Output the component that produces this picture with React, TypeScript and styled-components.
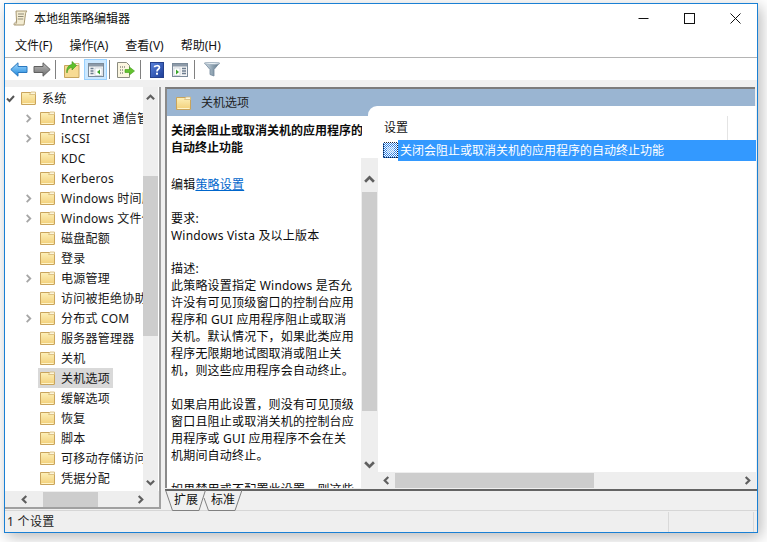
import React from "react";
import styled, { createGlobalStyle } from "styled-components";

const Global = createGlobalStyle`
  html, body { margin: 0; padding: 0; background: #fff; }
  body { width: 767px; height: 542px; overflow: hidden; font-family: "Noto Sans", "Noto Sans CJK SC", sans-serif; font-size: 12px; color: #1a1a1a; }
  * { box-sizing: border-box; }
`;
const Stage = styled.div`
  width: 767px; height: 542px; padding: 3px 9px 9px 4px;
`;
const Win = styled.div`
  width: 754px; height: 530px; border: 1px solid #1a80d4; background: #f0f0f0;
  display: flex; flex-direction: column; box-shadow: 3px 4px 14px rgba(0,0,0,.28);
`;
const TitleBar = styled.div`
  height: 33px; background: #fff; display: flex; align-items: center; padding: 0 0 5px 8px; flex: none;
`;
const TitleText = styled.span`
  margin-left: 6px; font-size: 12px; color: #111; flex: 1;
`;
const WinBtn = styled.div`
  width: 46px; height: 28px; display: flex; align-items: center; justify-content: center;
  &:last-child { margin-right: -1px; }
`;
const MenuBar = styled.div`
  height: 21px; background: #fff; border-bottom: 1px solid #b4b4b4; display: flex; padding-left: 10px; gap: 17px; flex: none;
`;
const MenuItem = styled.span`
  line-height: 17px; font-size: 12px; color: #111;
`;
const Toolbar = styled.div`
  height: 22px; background: #fff; display: flex; align-items: flex-end; padding-left: 5px; flex: none;
`;
const ToolBtn = styled.div<{ $on?: boolean; $w?: number }>`
  width: ${p => p.$w ?? 22}px; height: 21px; display: flex; align-items: center; justify-content: center; flex: none;
  ${p => p.$on ? "background:#cce8ff;border:1px solid #99d1ff;" : ""}
`;
const ToolSep = styled.div<{ $ml: number }>`
  width: 1px; height: 19px; background: #808080; margin: 0 4px 1px ${p => p.$ml}px; flex: none;
`;
const Main = styled.div`
  height: 430px; padding-top: 7px; display: flex; flex: none;
`;
const TreePane = styled.div`
  width: 156px; height: 422px; background: #fff; border-right: 2px solid #a0a0a0; border-bottom: 2px solid #a0a0a0; display: flex; flex-direction: column; flex: none;
`;
const TreeTop = styled.div`
  height: 404px; display: flex; flex: none;
`;
const TreeList = styled.div`
  width: 138px; overflow: hidden; flex: none; padding-top: 1px;
`;
const Row = styled.div<{ $root?: boolean }>`
  height: 20px; display: flex; align-items: center; white-space: nowrap; padding-left: ${p => p.$root ? 0 : 18}px;
`;
const Caret = styled.div<{ $root?: boolean }>`
  width: ${p => p.$root ? 14 : 15}px; height: 20px; display: flex; align-items: center; justify-content: center; flex: none;
  padding-right: 4px;
`;
const RowBody = styled.div<{ $sel?: boolean }>`
  display: flex; align-items: center; height: 20px; padding: 0 3px 0 2px; background: ${p => p.$sel ? "#d9d9d9" : "transparent"};
`;
const RowText = styled.span`
  margin-left: 6px; font-size: 12px; letter-spacing: .25px; color: #161616;
`;
const VTrack = styled.div<{ $w: number; $mt?: number; $ml?: number }>`
  width: ${p => p.$w}px; margin-top: ${p => p.$mt ?? 0}px; margin-left: ${p => p.$ml ?? 0}px; background: #eee; display: flex; flex-direction: column; align-items: center; flex: none;
`;
const ArrowSlot = styled.div<{ $h?: number; $end?: boolean; $pad: number }>`
  ${p => p.$h ? `height:${p.$h}px;flex:none;` : "flex:1;"}
  width: 100%; display: flex; justify-content: center;
  align-items: ${p => p.$end ? "flex-end" : "flex-start"};
  ${p => p.$end ? `padding-bottom:${p.$pad}px;` : `padding-top:${p.$pad}px;`}
`;
const VThumb = styled.div<{ $h: number }>`
  width: 15px; height: ${p => p.$h}px; background: #cdcdcd; flex: none;
`;
const HTrack = styled.div<{ $h: number }>`
  height: ${p => p.$h}px; background: #eee; display: flex; align-items: center; flex: none;
`;
const HSlot = styled.div<{ $w: number }>`
  width: ${p => p.$w}px; height: 100%; display: flex; align-items: center; justify-content: center; flex: none;
`;
const HThumb = styled.div<{ $w: number }>`
  width: ${p => p.$w}px; height: 15px; background: #cdcdcd; flex: none;
`;
const HFill = styled.div`
  flex: 1;
`;
const HEnd = styled.div`
  height: 2px; flex: 1; background: #f0f0f0;
`;
const Right = styled.div`
  width: 592px; margin-left: 4px; display: flex; flex-direction: column; flex: none;
`;
const Pane = styled.div`
  width: 590px; height: 401px; background: #fff; border-top: 2px solid #7c7c7c; border-left: 2px solid #8a8a8a; display: flex; flex-direction: column; flex: none;
`;
const Band = styled.div`
  height: 27px; background: #9ab5d2; display: flex; align-items: center; padding-left: 9px; flex: none;
`;
const BandText = styled.span`
  margin: 0 0 2px 10px; font-size: 12px; color: #1f1f1f;
`;
const Split = styled.div`
  height: 372px; display: flex; flex: none;
`;
const Desc = styled.div`
  width: 195px; height: 372px; overflow: hidden; padding: 6px 0 0 4px; line-height: 17px; font-size: 12px; flex: none; color: #0c0c0c;
`;
const DescTitle = styled.div`
  font-weight: 700; width: 194px; margin-bottom: 20px;
`;
const Para = styled.div<{ $gap?: number }>`
  margin-bottom: ${p => p.$gap ?? 17}px; width: 184px; letter-spacing: .2px;
`;
const PolicyLink = styled.span`
  color: #0066cc; text-decoration: underline;
`;
const List = styled.div`
  width: 378px; height: 372px; position: relative; display: flex; flex-direction: column; flex: none; background: #fff;
  &::before { content: ""; position: absolute; left: -10px; right: 0; top: -10px; height: 10px; background: #fff; border-top-left-radius: 9px; }
`;
const ColHead = styled.div`
  height: 24px; display: flex; flex: none; padding-left: 6px; align-items: center;
`;
const ColTitle = styled.span`
  width: 343px; font-size: 12px; color: #111; margin-top: -3px;
`;
const ColLine = styled.div`
  width: 1px; height: 24px; background: #e4e4e4;
`;
const SelRow = styled.div`
  height: 21px; display: flex; align-items: flex-start; padding: 0 0 0 5px; flex: none;
`;
const SelIconBox = styled.div`
  width: 15px; height: 21px; padding-top: 2px; flex: none;
`;
const SelText = styled.div`
  flex: 1; height: 21px; background: #3399ff; color: #fff; font-size: 12px; line-height: 21px; padding-left: 2px;
`;
const ListFill = styled.div`
  flex: 1;
`;
const TabStrip = styled.div`
  height: 21px; border-top: 2px solid #646464; width: 592px; margin-top: 1px; position: relative; flex: none; display: flex; padding-left: 9px; gap: 11px;
`;
const TabOutline = styled.svg`
  position: absolute; left: 0; top: -1px;
`;
const TabLabel = styled.span`
  position: relative; font-size: 12px; line-height: 18px; width: 26px; color: #111;
`;
const Status = styled.div`
  flex: 1; border-top: 1px solid #d6d6d6; background: #efefef; display: flex; align-items: stretch;
`;
const StatusCell = styled.div<{ $w: number; $line?: boolean }>`
  width: ${p => p.$w}px; margin-top: 1px; font-size: 12px; line-height: 19px; padding-left: 2px; letter-spacing: .3px; color: #222;
  ${p => p.$line ? "border-right: 1px solid #d9d9d9;" : ""}
`;

const Folder = () => (
  <svg width="15" height="14" viewBox="0 0 15 14">
    <defs><linearGradient id="fg" x1="0" y1="0" x2="0" y2="1"><stop offset="0" stopColor="#fdf0b8" /><stop offset="1" stopColor="#f2cf78" /></linearGradient></defs>
    <path d="M.5 1.500h13.500a.5.5 0 0 1 .5.5v11a.5.5 0 0 1-.5.5H.5z" fill="url(#fg)" stroke="#c9a45c" />
    <path d="M8.500 3.500 10 1h4.500v2.500z" fill="#fbf5dc" stroke="#d6b877" strokeWidth=".8" />
    <path d="M1.500 12.500h12" stroke="#fff4c8" />
  </svg>
);
const Chevron = ({ dir, color = "#5f5f5f", sw = 2.4, s = 9 }: { dir: "u" | "d" | "l" | "r"; color?: string; sw?: number; s?: number }) => {
  const d = { u: "M1 7 5 3l4 4", d: "M1 3l4 4 4-4", l: "M7 1 3 5l4 4", r: "M3 1l4 4-4 4" }[dir];
  return <svg width={s} height={s} viewBox="0 0 10 10"><path d={d} fill="none" stroke={color} strokeWidth={sw} /></svg>;
};
const ExpandedMark = () => (
  <svg width="9" height="9" viewBox="0 0 9 9"><path d="M1 4.500 3.500 7 8 2" fill="none" stroke="#555" strokeWidth="2" /></svg>
);
const Back = () => (
  <svg width="18" height="15" viewBox="0 0 18 15">
    <defs><linearGradient id="bk" x1="0" y1="0" x2="0" y2="1"><stop offset="0" stopColor="#a8dcff" /><stop offset="1" stopColor="#1a86dc" /></linearGradient></defs>
    <path d="M.8 7.500 8 .8v3.700h9v6H8v3.700z" fill="url(#bk)" stroke="#2a78bf" />
  </svg>
);
const Forward = () => (
  <svg width="18" height="15" viewBox="0 0 18 15">
    <defs><linearGradient id="fw" x1="0" y1="0" x2="0" y2="1"><stop offset="0" stopColor="#bcbcbc" /><stop offset="1" stopColor="#6e6e6e" /></linearGradient></defs>
    <path d="M17.200 7.500 10 .8v3.700H1v6h9v3.700z" fill="url(#fw)" stroke="#606060" />
  </svg>
);
const UpFolder = () => (
  <svg width="16" height="17" viewBox="0 0 16 17">
    <path d="M.5 4.500h14.500v12H.5z" fill="#f7db93" stroke="#c7a55e" />
    <path d="M10 4.500 11 2.500h4v2z" fill="#fbf5dc" stroke="#c7a55e" strokeWidth=".7" />
    <path d="M3 12C3.500 8 6 6.500 8 6.500V9l4.500-4.500L8 .5v3C4 4 2 8 3 12z" fill="#5fc02c" stroke="#3d9418" strokeWidth=".6" />
  </svg>
);
const Pane1 = ({ right }: { right?: boolean }) => (
  <svg width="16" height="14" viewBox="0 0 16 14">
    <rect x=".5" y=".5" width="15" height="13" fill="#f5f5f5" stroke="#7b8a99" />
    <rect x="1" y="1" width="14" height="2.500" fill="#8d9aa8" />
    {right ? (
      <><rect x="2" y="5" width="6" height="7.500" fill="#fff" stroke="#b8c2cc" strokeWidth=".6" />
        <path d="M4 6.500 7 9 4 11.500z" fill="#3aa52a" />
        <path d="M10 5.500h4M10 8h4M10 10.500h4" stroke="#6d7e90" strokeWidth="1.300" /></>
    ) : (
      <><path d="M2.500 5.500h3M2.500 8h3M2.500 10.500h3" stroke="#6d7e90" strokeWidth="1.300" />
        <rect x="7" y="5" width="7" height="7.500" fill="#fff" stroke="#b8c2cc" strokeWidth=".6" />
        <path d="M12 6.500 9 9l3 2.500z" fill="#3aa52a" /></>
    )}
  </svg>
);
const Export = () => (
  <svg width="18" height="16" viewBox="0 0 18 16">
    <path d="M.5.500h9l3 3v12H.5z" fill="#fbf6e0" stroke="#8c8c80" />
    <path d="M3 5h5M3 8h3M3 11h3" stroke="#555" strokeWidth="1" strokeDasharray="1 1" />
    <path d="M8 7.500h4.500V5l5 4-5 4v-2.500H8z" fill="#63c22f" stroke="#3f9a1a" strokeWidth=".6" />
  </svg>
);
const Help = () => (
  <svg width="14" height="16" viewBox="0 0 14 16">
    <defs><linearGradient id="hp" x1="0" y1="0" x2="1" y2="1"><stop offset="0" stopColor="#5a83dc" /><stop offset="1" stopColor="#1c3d97" /></linearGradient></defs>
    <rect x=".5" y=".5" width="13" height="15" fill="url(#hp)" stroke="#25408c" />
    <path d="M4.500 5.200C4.600 3.400 9.400 3 9.400 5.400c0 1.800-2.400 1.900-2.400 4" fill="none" stroke="#fff" strokeWidth="1.700" />
    <rect x="6" y="10.700" width="2" height="2" fill="#fff" />
  </svg>
);
const Funnel = () => (
  <svg width="16" height="15" viewBox="0 0 16 15">
    <defs><linearGradient id="fn" x1="0" y1="0" x2="1" y2="0"><stop offset="0" stopColor="#d9e3ea" /><stop offset=".5" stopColor="#92a6b5" /><stop offset="1" stopColor="#5d7485" /></linearGradient></defs>
    <path d="M.5 1h15L10 7.500v6.500L6 12.500v-5z" fill="url(#fn)" stroke="#71879a" strokeWidth=".8" />
    <ellipse cx="8" cy="1.500" rx="7.200" ry="1" fill="#eaf0f4" stroke="#8ba0b0" strokeWidth=".6" />
  </svg>
);
const AppIcon = () => (
  <svg width="15" height="17" viewBox="0 0 15 17">
    <path d="M3 1h11c-1 1-1.500 2-1.500 3L11 15H1.500C3 14 3.500 13 3.600 12z" fill="#f3ecd2" stroke="#a89872" />
    <path d="M5 4h6M5 6.500h5.500M4.700 9h5.500" stroke="#8f8a78" />
    <path d="M1 15c0-2 1-3 2.600-3" fill="none" stroke="#a89872" />
  </svg>
);
const SettingIcon = () => (
  <svg width="15" height="16" viewBox="0 0 15 16" shapeRendering="crispEdges" style={{ display: "block" }}>
    <defs><pattern id="dz" width="2" height="2" patternUnits="userSpaceOnUse"><rect width="2" height="2" fill="#2a7de1" /><rect width="1" height="1" fill="#fff" /><rect x="1" y="1" width="1" height="1" fill="#fff" /></pattern></defs>
    <rect width="15" height="16" fill="url(#dz)" />
    <rect x=".5" y=".5" width="14" height="15" fill="none" stroke="#16233f" strokeDasharray="1 1" />
    <rect x="4" y="5" width="7" height="6" fill="#cfe6ff" opacity=".6" />
  </svg>
);

const tree: [string, boolean, boolean?][] = [
  ["Internet 通信管理设置", true], ["iSCSI", true], ["KDC", false], ["Kerberos", false],
  ["Windows 时间服务", true], ["Windows 文件保护", true], ["磁盘配额", false], ["登录", false],
  ["电源管理", true], ["访问被拒绝协助", false], ["分布式 COM", true], ["服务器管理器", false],
  ["关机", false], ["关机选项", false, true], ["缓解选项", false], ["恢复", false],
  ["脚本", false], ["可移动存储访问", false], ["凭据分配", false],
];

export default function App() {
  return (
    <Stage>
      <Global />
      <Win>
        <TitleBar>
          <AppIcon />
          <TitleText>本地组策略编辑器</TitleText>
          <WinBtn><svg width="11" height="11" viewBox="0 0 11 11"><path d="M.5 5.500h10" stroke="#111" /></svg></WinBtn>
          <WinBtn><svg width="11" height="11" viewBox="0 0 11 11"><rect x=".5" y=".5" width="10" height="10" fill="none" stroke="#111" /></svg></WinBtn>
          <WinBtn><svg width="11" height="11" viewBox="0 0 11 11"><path d="M.5.500l10 10M10.500.500l-10 10" stroke="#111" /></svg></WinBtn>
        </TitleBar>
        <MenuBar>
          <MenuItem>文件(F)</MenuItem>
          <MenuItem>操作(A)</MenuItem>
          <MenuItem>查看(V)</MenuItem>
          <MenuItem>帮助(H)</MenuItem>
        </MenuBar>
        <Toolbar>
          <ToolBtn $w={18}><Back /></ToolBtn>
          <ToolBtn $w={5} />
          <ToolBtn $w={18}><Forward /></ToolBtn>
          <ToolSep $ml={4} />
          <ToolBtn $w={24}><UpFolder /></ToolBtn>
          <ToolBtn $w={23} $on><Pane1 /></ToolBtn>
          <ToolSep $ml={2} />
          <ToolBtn $w={24}><Export /></ToolBtn>
          <ToolSep $ml={2} />
          <ToolBtn $w={23}><Help /></ToolBtn>
          <ToolBtn $w={24}><Pane1 right /></ToolBtn>
          <ToolSep $ml={2} />
          <ToolBtn $w={26}><Funnel /></ToolBtn>
        </Toolbar>
        <Main>
          <TreePane>
            <TreeTop>
              <TreeList>
                <Row $root>
                  <Caret $root><ExpandedMark /></Caret>
                  <RowBody><Folder /><RowText>系统</RowText></RowBody>
                </Row>
                {tree.map(([t, exp, sel]) => (
                  <Row key={t}>
                    <Caret>{exp ? <Chevron dir="r" color="#a6a6a6" sw={2} /> : null}</Caret>
                    <RowBody $sel={sel}><Folder /><RowText>{t}</RowText></RowBody>
                  </Row>
                ))}
              </TreeList>
              <VTrack $w={15}>
                <ArrowSlot $h={89} $pad={6}><Chevron dir="u" /></ArrowSlot>
                <VThumb $h={160} />
                <ArrowSlot $end $pad={4}><Chevron dir="d" /></ArrowSlot>
              </VTrack>
            </TreeTop>
            <HTrack $h={16}>
              <HSlot $w={38}><Chevron dir="l" /></HSlot>
              <HThumb $w={55} />
              <HFill />
              <HSlot $w={38}><Chevron dir="r" /></HSlot>
            </HTrack>
            <HEnd />
          </TreePane>
          <Right>
            <Pane>
              <Band><Folder /><BandText>关机选项</BandText></Band>
              <Split>
                <Desc>
                  <DescTitle>关闭会阻止或取消关机的应用程序的自动终止功能</DescTitle>
                  <Para>编辑<PolicyLink>策略设置</PolicyLink></Para>
                  <Para $gap={16}>要求:<br />Windows Vista 及以上版本</Para>
                  <Para>描述:<br />此策略设置指定 Windows 是否允许没有可见顶级窗口的控制台应用程序和 GUI 应用程序阻止或取消关机。默认情况下，如果此类应用程序无限期地试图取消或阻止关机，则这些应用程序会自动终止。</Para>
                  <Para>如果启用此设置，则没有可见顶级窗口且阻止或取消关机的控制台应用程序或 GUI 应用程序不会在关机期间自动终止。</Para>
                  <Para>如果禁用或不配置此设置，则这些</Para>
                </Desc>
                <VTrack $w={17} $mt={42} $ml={-1}>
                  <ArrowSlot $h={34} $end $pad={7}><Chevron dir="u" s={11} /></ArrowSlot>
                  <VThumb $h={219} />
                  <ArrowSlot $end $pad={18}><Chevron dir="d" s={11} /></ArrowSlot>
                </VTrack>
                <List>
                  <ColHead>
                    <ColTitle>设置</ColTitle>
                    <ColLine />
                  </ColHead>
                  <SelRow>
                    <SelIconBox><SettingIcon /></SelIconBox>
                    <SelText>关闭会阻止或取消关机的应用程序的自动终止功能</SelText>
                  </SelRow>
                  <ListFill />
                  <HTrack $h={16}>
                    <HSlot $w={17}><Chevron dir="l" /></HSlot>
                    <HThumb $w={199} />
                    <HFill />
                    <HSlot $w={17}><Chevron dir="r" /></HSlot>
                  </HTrack>
                </List>
              </Split>
            </Pane>
            <TabStrip>
              <TabOutline width="90" height="22" viewBox="0 0 90 22">
                <path d="M.5 0 7.500 20.500H34L40.500 0M39 8l4.500 12.500H70L77 0" fill="none" stroke="#808080" />
              </TabOutline>
              <TabLabel>扩展</TabLabel>
              <TabLabel>标准</TabLabel>
            </TabStrip>
          </Right>
        </Main>
        <Status>
          <StatusCell $w={664} $line>1 个设置</StatusCell>
          <StatusCell $w={85} $line />
        </Status>
      </Win>
    </Stage>
  );
}
